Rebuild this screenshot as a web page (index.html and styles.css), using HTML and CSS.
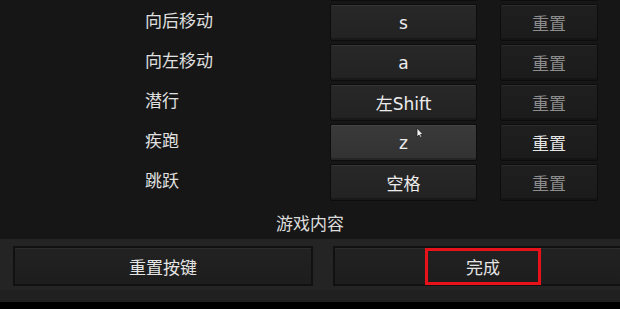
FILE: index.html
```html
<!DOCTYPE html>
<html lang="zh-CN">
  <head>
    <meta charset="UTF-8" />
    <meta name="viewport" content="width=device-width, initial-scale=1.0" />
    <title>按键控制</title>
    <link rel="stylesheet" href="styles.css">
  </head>
  <body>
    <div class="screen">
      <div class="key-list">
        <div class="key-rows">
          <!-- row scrolled off the top, only the button edges show -->
          <div class="key-row" aria-hidden="true">
            <span class="key-name"></span>
            <button class="key-btn"></button>
            <button class="reset-btn" disabled></button>
          </div>
          <div class="key-row">
            <span class="key-name">向后移动</span>
            <button class="key-btn">s</button>
            <button class="reset-btn" disabled>重置</button>
          </div>
          <div class="key-row">
            <span class="key-name">向左移动</span>
            <button class="key-btn">a</button>
            <button class="reset-btn" disabled>重置</button>
          </div>
          <div class="key-row">
            <span class="key-name">潜行</span>
            <button class="key-btn">左Shift</button>
            <button class="reset-btn" disabled>重置</button>
          </div>
          <div class="key-row">
            <span class="key-name">疾跑</span>
            <button class="key-btn hover">z</button>
            <button class="reset-btn">重置</button>
            <!-- mouse pointer -->
            <svg class="cursor" width="8" height="12" viewBox="0 0 8 12">
              <path d="M1 1 L1 10 L3 8 L5 11 L6 10 L4.5 7.5 L7 7.5 Z" fill="#f0f0f0" stroke="#222" stroke-width="0.8"/>
            </svg>
          </div>
          <div class="key-row">
            <span class="key-name">跳跃</span>
            <button class="key-btn">空格</button>
            <button class="reset-btn" disabled>重置</button>
          </div>
        </div>
      </div>
      <div class="category">游戏内容</div>
      <div class="footer">
        <button class="footer-btn">重置按键</button>
        <button class="footer-btn">
          完成
          <span class="highlight"></span>
        </button>
      </div>
    </div>
  </body>
</html>
```

FILE: styles.css
```css
body {
  margin: 0;
  width: 620px;
  height: 309px;
  overflow: hidden;
  background: #000;
  font-family: "Noto Sans CJK SC", "DejaVu Sans", sans-serif;
  color: #e2e2e2;
}

.screen {
  height: 302px;
  background: #161616;
  display: flex;
  flex-direction: column;
}

.key-list {
  height: 205px;
  overflow: hidden;
}

.key-rows {
  margin-top: -39px;
}

.key-row {
  position: relative;
  display: flex;
  align-items: flex-start;
  height: 40px;
  padding-left: 145px;
}

.key-name {
  width: 185px;
  margin-top: 9px;
  font-size: 17px;
  line-height: 20px;
  color: #e0e0e0;
}

button {
  font-family: "DejaVu Sans", "Noto Sans CJK SC", sans-serif;
  cursor: pointer;
}

.key-btn,
.reset-btn {
  margin-top: 3px;
  height: 37px;
  border: 1px solid #0d0d0d;
  border-radius: 2px;
  box-shadow: inset 0 1px 0 rgba(255, 255, 255, 0.06), inset 0 -2px 0 rgba(0, 0, 0, 0.25);
  font-size: 17px;
  padding: 0;
}

.key-btn {
  width: 147px;
  background: linear-gradient(#282828, #222);
  color: #ececec;
}

.key-btn.hover {
  background: linear-gradient(#3a3a3a, #323232);
}

.reset-btn {
  width: 98px;
  margin-left: 23px;
  background: linear-gradient(#1f1f1f, #1b1b1b);
  color: #e4e4e4;
  font-family: "Noto Sans CJK SC", sans-serif;
}

.reset-btn:disabled {
  color: #8c8c8c;
}

.cursor {
  position: absolute;
  left: 416px;
  top: 6px;
}

.category {
  height: 34px;
  padding-top: 8px;
  box-sizing: border-box;
  text-align: center;
  font-size: 17px;
  line-height: 20px;
  color: #dcdcdc;
}

.footer {
  flex: 1;
  display: flex;
  gap: 20px;
  padding: 7px 0 0 13px;
  background: #242424;
  box-shadow: inset 0 -12px 0 #202020;
  overflow: hidden;
}

.footer-btn {
  position: relative;
  flex: 0 0 300px;
  height: 40px;
  background: linear-gradient(#222, #1d1d1d);
  border: 2px solid #111;
  box-shadow: inset 0 1px 0 rgba(255, 255, 255, 0.05);
  color: #e4e4e4;
  font-family: "Noto Sans CJK SC", sans-serif;
  font-size: 17px;
  padding: 0;
}

.highlight {
  position: absolute;
  left: 90px;
  top: 0;
  width: 116px;
  height: 37px;
  box-sizing: border-box;
  border: 3px solid #e8121a;
}
```
